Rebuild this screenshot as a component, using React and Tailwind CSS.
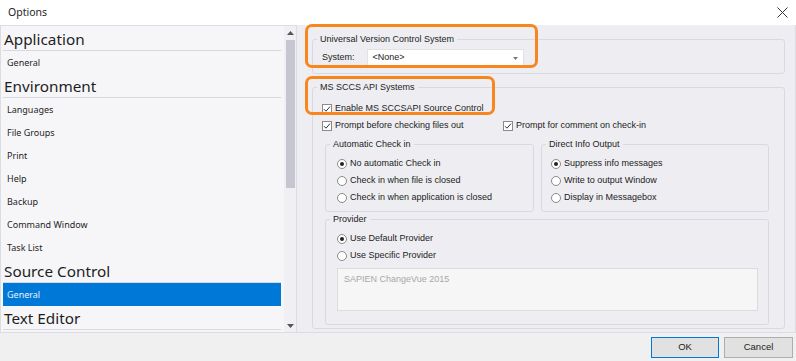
import React from 'react';

const navItems = [
  { type: 'head', label: 'Application' },
  { type: 'item', label: 'General' },
  { type: 'head', label: 'Environment' },
  { type: 'item', label: 'Languages' },
  { type: 'item', label: 'File Groups' },
  { type: 'item', label: 'Print' },
  { type: 'item', label: 'Help' },
  { type: 'item', label: 'Backup' },
  { type: 'item', label: 'Command Window' },
  { type: 'item', label: 'Task List' },
  { type: 'head', label: 'Source Control' },
  { type: 'item', label: 'General', selected: true },
  { type: 'head', label: 'Text Editor' },
];

const Check = ({ label }) => (
  <label className="flex items-center gap-[3px] h-[14px]">
    <span className="w-[10px] h-[10px] bg-white border border-[#8a8a8a] flex items-center justify-center">
      <svg width="8" height="8" viewBox="0 0 8 8">
        <path d="M1 4.2 L3 6.2 L7 1.6" fill="none" stroke="#333" strokeWidth="1" />
      </svg>
    </span>
    <span>{label}</span>
  </label>
);

const Radio = ({ label, on }) => (
  <label className="flex items-center gap-[3px] h-[17px]">
    <span className="w-[10px] h-[10px] rounded-full bg-white border border-[#8a8a8a] flex items-center justify-center">
      {on && <span className="w-[4px] h-[4px] rounded-full bg-[#222]" />}
    </span>
    <span>{label}</span>
  </label>
);

const Group = ({ title, className, children }) => (
  <fieldset className={`border border-[#d9d9e1] rounded-[3px] ${className}`}>
    <legend className="ml-[4px] px-[3px] leading-[12px]">{title}</legend>
    {children}
  </fieldset>
);

export default function App() {
  return (
    <div className="w-[796px] h-[361px] flex flex-col bg-[#eeeef2] overflow-hidden text-[#1e1e1e]">
      <div className="h-[25px] bg-white flex items-center justify-between pl-[8px] pr-[8px] font-['Noto_Sans',sans-serif] text-[10.5px]">
        <span>Options</span>
        <svg width="11" height="11" viewBox="0 0 11 11">
          <path d="M0.5 0.5 L10.5 10.5 M10.5 0.5 L0.5 10.5" stroke="#333" strokeWidth="1" />
        </svg>
      </div>

      <div className="flex h-[308px]">
        <div className="w-[297px] flex border border-[#dcdce4] bg-[#f6f6f9] font-['Noto_Sans',sans-serif]">
          <div className="flex-1 flex flex-col pl-[2px] pr-[3px] pt-[1px]">
            {navItems.map((n, i) =>
              n.type === 'head' ? (
                <div key={i} className="h-[24px] shrink-0 border-b border-[#d8d8e0] text-[15.3px] pt-[2px] leading-[20px] pl-[1px]">
                  {n.label}
                </div>
              ) : (
                <div
                  key={i}
                  className={`h-[23px] shrink-0 flex items-center pl-[4px] text-[9px] ${n.selected ? 'bg-[#0078d7] text-[#e8f1fb]' : ''}`}
                >
                  {n.label}
                </div>
              )
            )}
          </div>
          <div className="w-[12px] flex flex-col items-center bg-[#f0f0f4]">
            <svg width="7" height="4" viewBox="0 0 7 4" className="mt-[5px]">
              <path d="M0 4 L3.5 0 L7 4 Z" fill="#555" />
            </svg>
            <div className="mt-[5px] w-[9px] h-[148px] bg-[#c6c6d0]" />
            <div className="flex-1" />
            <svg width="7" height="4" viewBox="0 0 7 4" className="mb-[4px]">
              <path d="M0 0 L3.5 4 L7 0 Z" fill="#555" />
            </svg>
          </div>
        </div>

        <div className="relative flex-1 border-r border-b border-[#dcdce4] pl-[15px] pr-[10px] pt-[8px] font-['Liberation_Sans',Arial,sans-serif] text-[9px] text-[#222]">
          <Group title="Universal Version Control System" className="h-[41px]">
            <div className="flex items-center gap-[12px] mt-[4px] pl-[9px] pr-[260px]">
              <span>System:</span>
              <div className="flex-1 h-[18px] bg-white border border-[#e2e2e2] flex items-center justify-between px-[5px]">
                <span>&lt;None&gt;</span>
                <svg width="5" height="3" viewBox="0 0 5 3">
                  <path d="M0 0 L2.5 3 L5 0 Z" fill="#777" />
                </svg>
              </div>
            </div>
          </Group>

          <Group title="MS SCCS API Systems" className="mt-[7px] h-[248px]">
            <div className="pl-[9px] mt-[9px]">
              <Check label="Enable MS SCCSAPI Source Control" />
            </div>
            <div className="flex mt-[3px] pl-[9px]">
              <div className="w-[181px]">
                <Check label="Prompt before checking files out" />
              </div>
              <Check label="Prompt for comment on check-in" />
            </div>
            <div className="flex gap-[7px] mt-[5px] pl-[12px] pr-[15px]">
              <Group title="Automatic Check in" className="w-[209px] h-[74px]">
                <div className="mt-[5px] pl-[11px]">
                  <Radio label="No automatic Check in" on />
                  <Radio label="Check in when file is closed" />
                  <Radio label="Check in when application is closed" />
                </div>
              </Group>
              <Group title="Direct Info Output" className="flex-1 h-[74px]">
                <div className="mt-[5px] pl-[9px]">
                  <Radio label="Suppress info messages" on />
                  <Radio label="Write to output Window" />
                  <Radio label="Display in Messagebox" />
                </div>
              </Group>
            </div>
            <div className="pl-[12px] pr-[15px] mt-[1px]">
              <Group title="Provider" className="h-[112px]">
                <div className="mt-[5px] pl-[11px]">
                  <Radio label="Use Default Provider" on />
                  <Radio label="Use Specific Provider" />
                </div>
                <div className="ml-[11px] mr-[10px] mt-[4px] h-[43px] bg-[#f6f6f6] border border-[#dcdcdc] px-[6px] pt-[4px] text-[#a8a8a8]">
                  SAPIEN ChangeVue 2015
                </div>
              </Group>
            </div>
          </Group>

          <div className="absolute left-[8px] top-[-1px] w-[233px] h-[44px] border-[3px] border-[#f7861e] rounded-[7px]" />
          <div className="absolute left-[8px] top-[51px] w-[190px] h-[39px] border-[3px] border-[#f7861e] rounded-[7px]" />
        </div>
      </div>

      <div className="flex-1 bg-[#f0f0f0] flex items-center justify-end gap-[5px] pr-[3px] font-['Liberation_Sans',Arial,sans-serif] text-[9.5px] text-[#222]">
        <button className="w-[68px] h-[21px] bg-[#e1e1e1] border border-[#0078d7]">OK</button>
        <button className="w-[69px] h-[21px] bg-[#e1e1e1] border border-[#adadad]">Cancel</button>
      </div>
    </div>
  );
}
